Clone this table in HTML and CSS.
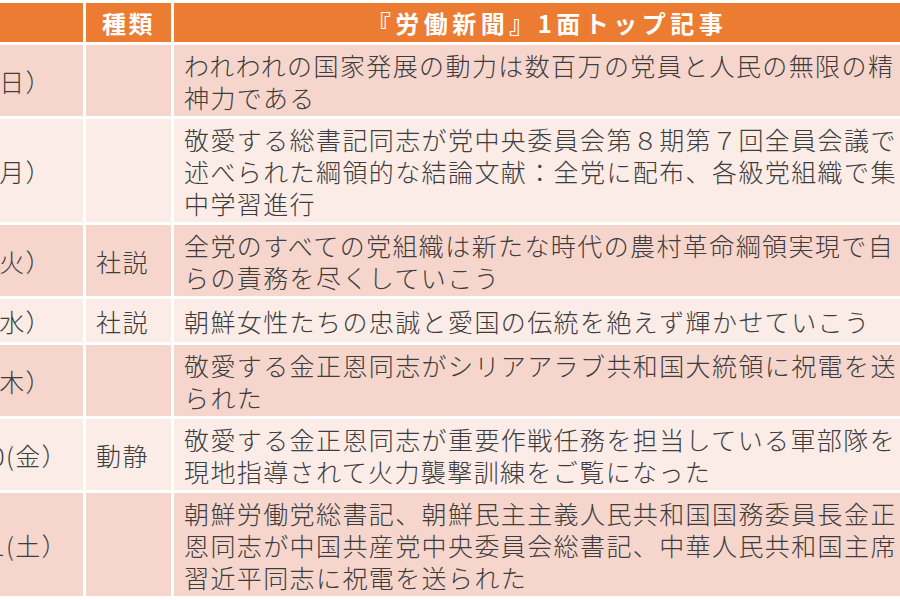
FILE: index.html
```html
<!DOCTYPE html>
<html lang="ja">
<head>
<meta charset="utf-8">
<title>労働新聞 1面トップ記事</title>
<link rel="stylesheet" href="styles.css">
</head>
<body>
<div class="frame">
<table class="news">
  <thead>
    <tr>
      <th class="c-date"></th>
      <th class="c-kind">種類</th>
      <th class="c-title">『労働新聞』1面トップ記事</th>
    </tr>
  </thead>
  <tbody>
    <tr class="band1">
      <td class="c-date">6月5日（日）</td>
      <td class="c-kind"></td>
      <td class="c-title">われわれの国家発展の動力は数百万の党員と人民の無限の精神力である</td>
    </tr>
    <tr class="band2">
      <td class="c-date">6月6日（月）</td>
      <td class="c-kind"></td>
      <td class="c-title">敬愛する総書記同志が党中央委員会第８期第７回全員会議で述べられた綱領的な結論文献：全党に配布、各級党組織で集中学習進行</td>
    </tr>
    <tr class="band1">
      <td class="c-date">6月7日（火）</td>
      <td class="c-kind">社説</td>
      <td class="c-title">全党のすべての党組織は新たな時代の農村革命綱領実現で自らの責務を尽くしていこう</td>
    </tr>
    <tr class="band2 single">
      <td class="c-date">6月8日（水）</td>
      <td class="c-kind">社説</td>
      <td class="c-title">朝鮮女性たちの忠誠と愛国の伝統を絶えず輝かせていこう</td>
    </tr>
    <tr class="band1">
      <td class="c-date">6月9日（木）</td>
      <td class="c-kind"></td>
      <td class="c-title">敬愛する金正恩同志がシリアアラブ共和国大統領に祝電を送られた</td>
    </tr>
    <tr class="band2">
      <td class="c-date date-half">6月10(金）</td>
      <td class="c-kind">動静</td>
      <td class="c-title">敬愛する金正恩同志が重要作戦任務を担当している軍部隊を現地指導されて火力襲撃訓練をご覧になった</td>
    </tr>
    <tr class="band1">
      <td class="c-date date-half">6月11(土）</td>
      <td class="c-kind"></td>
      <td class="c-title">朝鮮労働党総書記、朝鮮民主主義人民共和国国務委員長金正恩同志が中国共産党中央委員会総書記、中華人民共和国主席習近平同志に祝電を送られた</td>
    </tr>
  </tbody>
</table>
</div>
</body>
</html>
```
FILE: styles.css
```css
html, body {
  margin: 0;
  padding: 0;
  background: #ffffff;
}
body {
  width: 900px;
  height: 600px;
  overflow: hidden;
}
.frame {
  margin-left: -170px;
}
.news {
  border-collapse: separate;
  border-spacing: 3px;
  background: #ffffff;
  font-family: "Noto Sans CJK JP", "Noto Sans", sans-serif;
  color: #3d3d3d;
  table-layout: fixed;
  width: 1107px;
}
.news th {
  background: #ec7c31;
  color: #ffffff;
  font-weight: 700;
  font-size: 24px;
  height: 39px;
  padding: 0;
  line-height: 39px;
  text-align: center;
  letter-spacing: 4px;
}
.news th.c-kind {
  letter-spacing: 2.5px;
}
.news th.c-title {
  letter-spacing: 4.5px;
  text-indent: -14px;
}
.news td {
  font-size: 25px;
  font-weight: 300;
  line-height: 32px;
  letter-spacing: 1.4px;
  padding: 3.5px 10px;
  vertical-align: middle;
}
.c-date {
  width: 250px;
}
.c-kind {
  width: 85px;
}
.c-title {
  width: 760px;
}
.news td.c-date {
  text-align: right;
  padding-right: 31px;
  padding-left: 0;
  white-space: nowrap;
}
.news td.date-half {
  padding-right: 15px;
}
.news td.c-kind {
  text-align: left;
  padding-left: 10px;
  padding-right: 0;
}
.news td.c-title {
  padding-left: 10px;
  padding-right: 20px;
}
.band1 td {
  background: #f6d6cc;
}
.band2 td {
  background: #fbece8;
}
.single td {
  height: 36px;
}
```
